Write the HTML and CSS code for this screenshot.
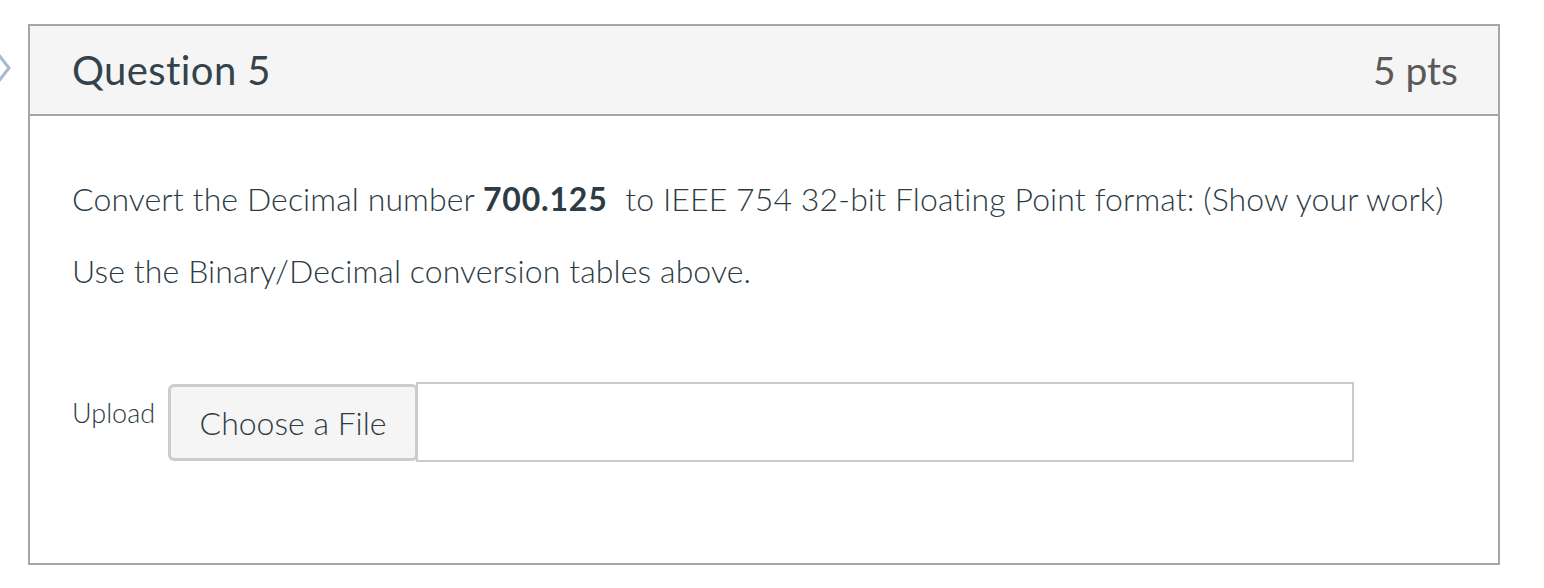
FILE: index.html
```
<!DOCTYPE html>
<html>
<head>
<meta charset="utf-8">
<link rel="stylesheet" href="styles.css">
</head>
<body>
<div class="page">
  <svg class="chevron" width="14" height="32" viewBox="0 0 14 32"><path d="M-2 2 L9 16 L-2 30" fill="none" stroke="#a9bacb" stroke-width="3"/></svg>
  <div class="question">
    <div class="header">
      <h2 class="title">Question 5</h2>
      <div class="pts">5 pts</div>
    </div>
    <div class="body">
      <p class="text">Convert the Decimal number <strong>700.125</strong>&nbsp; to IEEE 754 32-bit Floating Point format: (Show your work)</p>
      <p class="text second">Use the Binary/Decimal conversion tables above.</p>
      <div class="upload">
        <span class="label">Upload</span>
        <button class="choose">Choose a File</button>
        <div class="field"></div>
      </div>
    </div>
  </div>
</div>
</body>
</html>
```
FILE: styles.css
```
html, body { margin: 0; padding: 0; background: #fff; }
body { font-family: Lato, "Open Sans", sans-serif; color: #2d3b45; }
.page { position: relative; padding: 24px 0 0 28px; width: 1472px; }
.chevron { position: absolute; left: 0; top: 52px; }
.question { border: 2px solid #a6a6a6; height: 541px; box-sizing: border-box; }
.header { background: #f5f5f5; border-bottom: 2px solid #a6a6a6; height: 90px; box-sizing: border-box; display: flex; align-items: center; justify-content: space-between; padding: 0 40px 0 42px; }
.title { margin: 0; font-weight: 400; font-size: 40px; letter-spacing: 0.4px; color: #34424c; }
.pts { font-size: 39px; color: #595959; }
.body { padding: 63px 0 0 42px; }
.text { margin: 0; font-size: 32px; font-weight: 300; line-height: 40px; letter-spacing: 0.1px; }
.text strong { font-weight: 700; letter-spacing: 0.8px; }
.second { margin-top: 32px; }
.upload { display: flex; align-items: flex-start; margin-top: 91px; }
.label { font-size: 27px; font-weight: 300; margin-top: 14px; width: 97px; }
.choose { font-family: Lato, sans-serif; font-size: 32px; font-weight: 300; color: #2d3b45; background: #f5f5f5; border: 3px solid #c7cdd1; border-radius: 6px; width: 250px; height: 77px; margin-top: 2px; margin-left: -1px; padding: 0; }
.field { width: 938px; height: 80px; border: 2px solid #c7cdd1; box-sizing: border-box; margin-left: -2px; }
```
